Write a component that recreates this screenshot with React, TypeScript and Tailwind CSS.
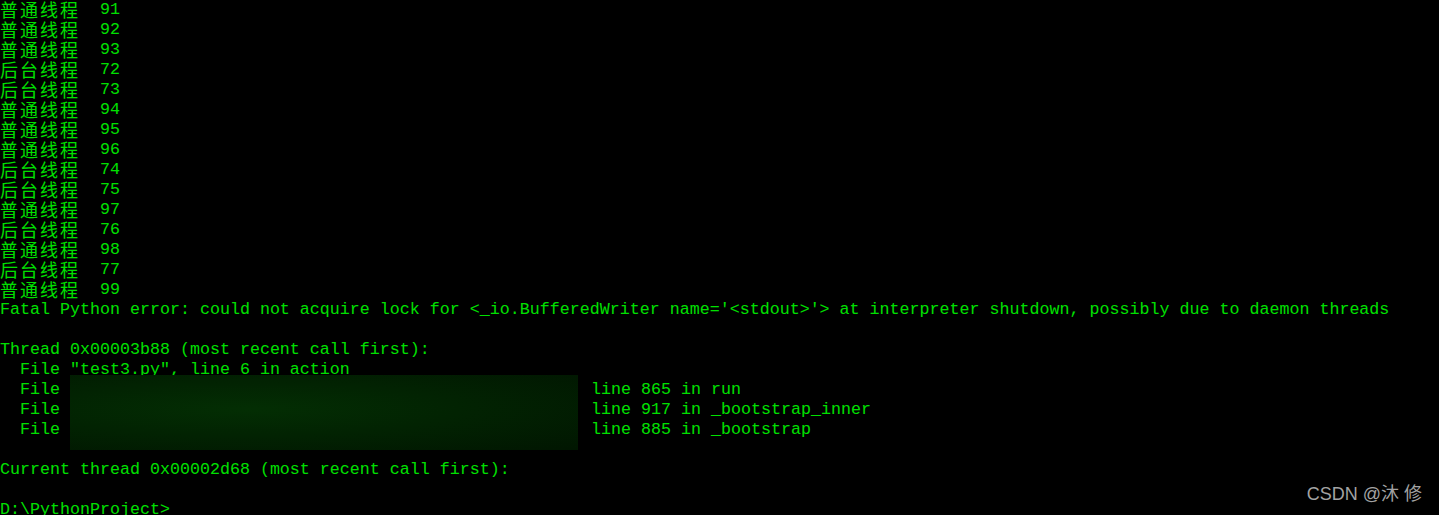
import React from "react";

const cjkLines: [string, string][] = [
  ["普通线程", "91"],
  ["普通线程", "92"],
  ["普通线程", "93"],
  ["后台线程", "72"],
  ["后台线程", "73"],
  ["普通线程", "94"],
  ["普通线程", "95"],
  ["普通线程", "96"],
  ["后台线程", "74"],
  ["后台线程", "75"],
  ["普通线程", "97"],
  ["后台线程", "76"],
  ["普通线程", "98"],
  ["后台线程", "77"],
  ["普通线程", "99"],
];

function Line({ children }: { children?: React.ReactNode }) {
  return <div className="h-5 leading-5 whitespace-pre flex items-center">{children}</div>;
}

function FileLine({ tail }: { tail: string }) {
  return (
    <Line>
      <span className="w-[591px] shrink-0">{"  File"}</span>
      <span>{tail}</span>
    </Line>
  );
}

export default function App() {
  return (
    <div className="relative w-[1439px] h-[515px] overflow-hidden bg-black text-[#00e000] font-['Liberation_Mono','Noto_Sans_CJK_SC',monospace] text-[16.67px]">
      <div className="flex flex-col">
        {cjkLines.map(([a, b], i) => (
          <Line key={i}>
            <span className="self-start font-['Noto_Sans_CJK_SC',sans-serif] text-[18px] tracking-[2px] leading-[18px]">{a}</span>
            <span>{"  " + b}</span>
          </Line>
        ))}
        <Line>
          {"Fatal Python error: could not acquire lock for <_io.BufferedWriter name='<stdout>'> at interpreter shutdown, possibly due to daemon threads"}
        </Line>
        <Line />
        <Line>{"Thread 0x00003b88 (most recent call first):"}</Line>
        <Line>{'  File "test3.py", line 6 in action'}</Line>
        <FileLine tail="line 865 in run" />
        <FileLine tail="line 917 in _bootstrap_inner" />
        <FileLine tail="line 885 in _bootstrap" />
        <Line />
        <Line>{"Current thread 0x00002d68 (most recent call first):"}</Line>
        <Line />
        <Line>{"D:\\PythonProject>"}</Line>
      </div>

      <div className="absolute left-[70px] top-[375px] w-[508px] h-[75px] bg-[radial-gradient(ellipse_at_35%_45%,#032e03_0%,#022302_45%,#011601_100%)]" />

      <div className="absolute right-[17px] top-[482px] text-[18px] leading-6 text-[#a3a3a3] font-['Liberation_Sans','Noto_Sans_CJK_SC',sans-serif]">
        CSDN @沐 修
      </div>
    </div>
  );
}
